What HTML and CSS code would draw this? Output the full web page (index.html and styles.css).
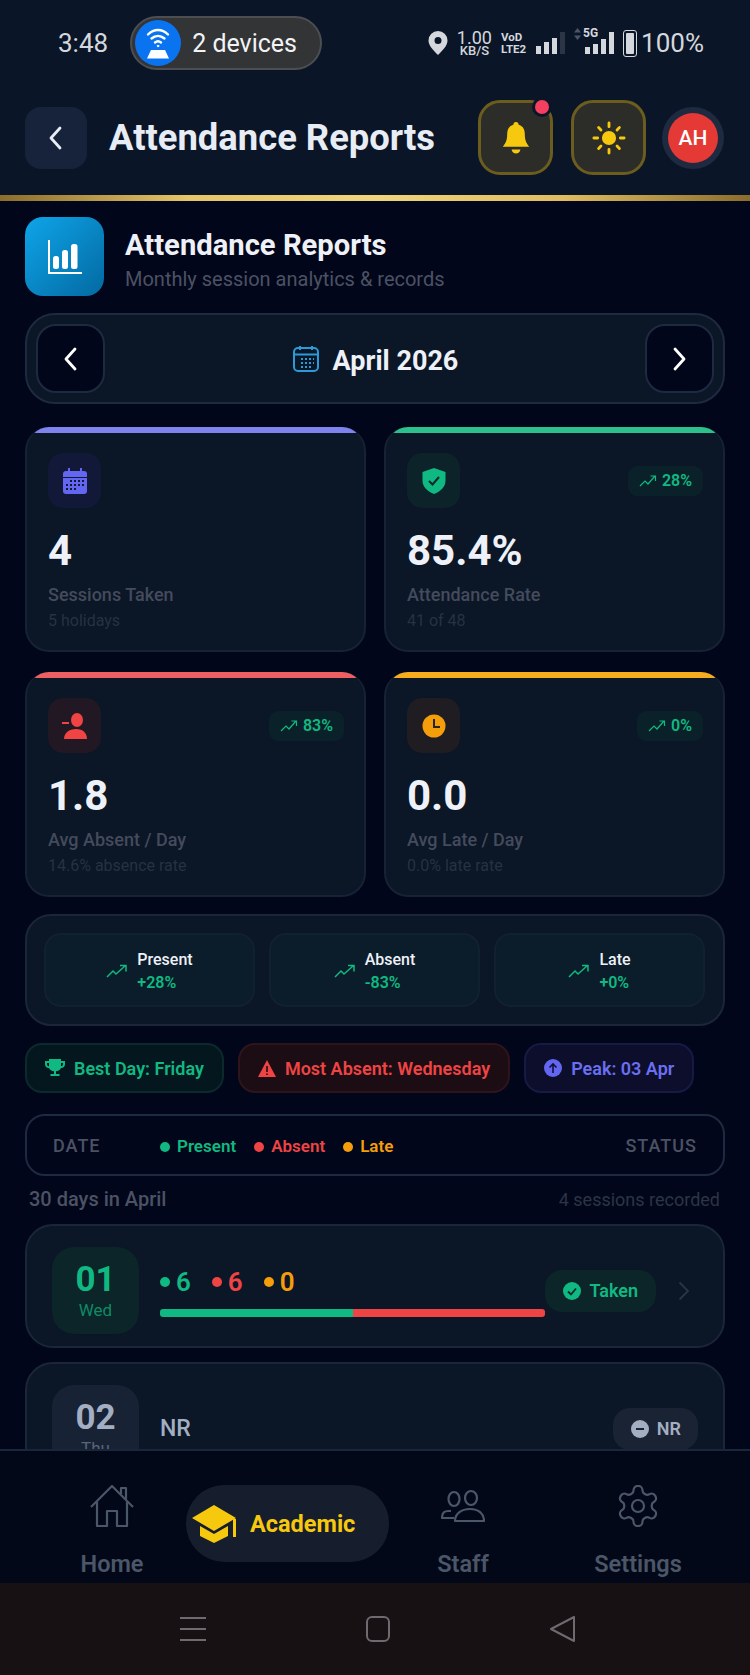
FILE: index.html
```html
<!DOCTYPE html>
<html lang="en">
<head>
<meta charset="UTF-8">
<meta name="viewport" content="width=device-width, initial-scale=1.0">
<title>Attendance Reports</title>
<link rel="stylesheet" href="styles.css">
</head>
<body>
<div class="app">

  <!-- Phone status bar -->
  <div class="statusbar">
    <span class="clock">3:48</span>
    <div class="hotspot">
      <span class="hotspot-icon">
        <svg width="30" height="36" viewBox="0 0 30 36" fill="none" stroke="#fff" stroke-width="2.4" stroke-linecap="round">
          <path d="M5 9.500c6-6 14-6 20 0"/><path d="M8.500 13.500c4-3.500 9-3.500 13 0"/><path d="M12 17.500c2-1.700 4-1.700 6 0"/>
          <circle cx="15" cy="21" r="0.8" fill="#fff" stroke-width="1"/>
          <path d="M4 33.500l4-8.500h14l4 8.500z" fill="#fff" stroke="none"/>
        </svg>
      </span>
      <span>2 devices</span>
    </div>
    <div class="status-right">
      <svg class="pin" width="20" height="24" viewBox="0 0 20 24"><path fill="#d4d7dc" fill-rule="evenodd" d="M10 0a9.500 9.500 0 0 1 9.500 9.500C19.500 15 14 20 10 24 6 20 .5 15 .5 9.500A9.500 9.500 0 0 1 10 0zm0 6a3.500 3.500 0 1 0 0 7 3.500 3.500 0 0 0 0-7z"/></svg>
      <div class="speed"><b>1.00</b><i>KB/S</i></div>
      <div class="volte"><b>VoD</b><b>LTE2</b></div>
      <div class="bars">
        <span class="h1"></span><span class="h2"></span><span class="h3"></span><span class="h4 off"></span>
      </div>
      <div class="net5g">
        <svg class="updown" width="7" height="12" viewBox="0 0 7 12" fill="#4a5566"><path d="M3.500 0L7 4.500H0zM3.500 12L0 7.500h7z"/></svg>
        <em>5G</em>
        <div class="bars">
          <span class="g1"></span><span class="g2"></span><span class="g3"></span><span class="h4"></span>
        </div>
      </div>
      <span class="battery"><span></span></span>
      <span class="percent">100%</span>
    </div>
  </div>

  <!-- App header -->
  <header class="topbar">
    <button class="back-btn">
      <svg width="20" height="26" viewBox="0 0 20 26" fill="none" stroke="#e8edf5" stroke-width="2.8" stroke-linecap="round" stroke-linejoin="round"><path d="M14 3L5 13l9 10"/></svg>
    </button>
    <h1 class="page-title">Attendance Reports</h1>
    <button class="gold-btn bell">
      <svg width="30" height="34" viewBox="0 0 34 38" fill="#f6c90e"><path d="M17 1c2 0 3 1.500 3 3 5 1.500 7 5.500 7 11 0 7 2 10 5 14H2c3-4 5-7 5-14 0-5.500 2-9.500 7-11 0-1.500 1-3 3-3z"/><path d="M12 32h10c-.5 3-2.500 4.500-5 4.500S12.500 35 12 32z"/></svg>
      <span class="notif-dot"></span>
    </button>
    <button class="gold-btn">
      <svg width="34" height="34" viewBox="0 0 36 36" fill="#f6c90e" stroke="#f6c90e" stroke-width="3" stroke-linecap="round"><circle cx="18" cy="18" r="7.500" stroke="none"/><path d="M18 2v4M18 30v4M2 18h4M30 18h4M7 7l2.500 2.500M26.500 26.500L29 29M7 29l2.500-2.500M26.500 9.500L29 7" fill="none"/></svg>
    </button>
    <div class="avatar"><span>AH</span></div>
  </header>
  <div class="gold-line"></div>

  <main class="content">

    <div class="section-head">
      <div class="section-icon">
        <svg width="36" height="36" viewBox="0 0 36 36" fill="#fff"><path d="M2 1v33h33" fill="none" stroke="#fff" stroke-width="2"/><rect x="6" y="17" width="6" height="13" rx="2.500"/><rect x="15" y="11" width="6" height="19" rx="2.500"/><rect x="24" y="5" width="6.500" height="25" rx="2.500"/></svg>
      </div>
      <div class="section-text">
        <h2>Attendance Reports</h2>
        <p>Monthly session analytics &amp; records</p>
      </div>
    </div>

    <div class="month-nav">
      <button class="month-btn">
        <svg width="20" height="26" viewBox="0 0 20 26" fill="none" stroke="#fff" stroke-width="2.8" stroke-linecap="round" stroke-linejoin="round"><path d="M14 3L5 13l9 10"/></svg>
      </button>
      <div class="month-label">
        <svg width="28" height="27" viewBox="0 0 28 27" fill="none" stroke="#2c9ad8" stroke-width="2"><rect x="2" y="3" width="24" height="23" rx="4"/><path d="M2 9.500h24M8 1v4M20 1v4"/><path d="M9 14h2M13 14h2M17 14h2M21 14h1M9 18h2M13 18h2M17 18h2M21 18h1M9 22h2M13 22h2M17 22h2" stroke-width="1.8"/></svg>
        <span>April 2026</span>
      </div>
      <button class="month-btn">
        <svg width="20" height="26" viewBox="0 0 20 26" fill="none" stroke="#fff" stroke-width="2.8" stroke-linecap="round" stroke-linejoin="round"><path d="M6 3l9 10-9 10"/></svg>
      </button>
    </div>

    <div class="stat-grid">
      <div class="stat-card indigo">
        <div class="stat-top">
          <span class="stat-icon">
            <svg width="24" height="26" viewBox="0 0 24 26" fill="#6366f1"><path fill-rule="evenodd" d="M5 0h2v3h10V0h2v3h2a3 3 0 0 1 3 3v17a3 3 0 0 1-3 3H3a3 3 0 0 1-3-3V6a3 3 0 0 1 3-3h2zM0 9v1h24V9zM7 12v2h2v-2zm4 0v2h2v-2zm4 0v2h2v-2zm4 0v2h2v-2zM3 16v2h2v-2zm4 0v2h2v-2zm4 0v2h2v-2zm4 0v2h2v-2zm4 0v2h2v-2zM3 20v2h2v-2zm4 0v2h2v-2zm4 0v2h2v-2z"/></svg>
          </span>
        </div>
        <div class="stat-value">4</div>
        <div class="stat-label">Sessions Taken</div>
        <div class="stat-sub">5 holidays</div>
      </div>

      <div class="stat-card green">
        <div class="stat-top">
          <span class="stat-icon">
            <svg width="24" height="26" viewBox="0 0 24 26"><path fill="#10b981" d="M12 0l11.500 4v8.500C23.500 19 18.500 23.500 12 26 5.500 23.500.5 19 .5 12.500V4z"/><path d="M7 13l3.500 3.500L17 9" fill="none" stroke="#0a2a2a" stroke-width="2"/></svg>
          </span>
          <span class="trend">
            <svg width="18" height="12" viewBox="0 0 18 12" fill="none" stroke="#10b981" stroke-width="1.2"><path d="M1 11l5-5 3 3 7-8M11.500 1H16.500V6"/></svg>
            28%
          </span>
        </div>
        <div class="stat-value">85.4%</div>
        <div class="stat-label">Attendance Rate</div>
        <div class="stat-sub">41 of 48</div>
      </div>

      <div class="stat-card red">
        <div class="stat-top">
          <span class="stat-icon">
            <svg width="26" height="26" viewBox="0 0 26 26" fill="#ef4444"><ellipse cx="15" cy="7" rx="6" ry="7"/><path d="M3 26c0-6 5-10 12-10s11 4 11 10z" transform="translate(-1 0)"/><rect x="0" y="9" width="7" height="2"/></svg>
          </span>
          <span class="trend">
            <svg width="18" height="12" viewBox="0 0 18 12" fill="none" stroke="#10b981" stroke-width="1.2"><path d="M1 11l5-5 3 3 7-8M11.500 1H16.500V6"/></svg>
            83%
          </span>
        </div>
        <div class="stat-value">1.8</div>
        <div class="stat-label">Avg Absent / Day</div>
        <div class="stat-sub">14.6% absence rate</div>
      </div>

      <div class="stat-card amber">
        <div class="stat-top">
          <span class="stat-icon">
            <svg width="24" height="24" viewBox="0 0 24 24"><circle cx="12" cy="12" r="11.500" fill="#f59e0b"/><path d="M12 5v8h6" fill="none" stroke="#2a2420" stroke-width="2"/></svg>
          </span>
          <span class="trend">
            <svg width="18" height="12" viewBox="0 0 18 12" fill="none" stroke="#10b981" stroke-width="1.2"><path d="M1 11l5-5 3 3 7-8M11.500 1H16.500V6"/></svg>
            0%
          </span>
        </div>
        <div class="stat-value">0.0</div>
        <div class="stat-label">Avg Late / Day</div>
        <div class="stat-sub">0.0% late rate</div>
      </div>
    </div>

    <div class="compare-panel">
      <div class="compare-item">
        <svg width="22" height="14" viewBox="0 0 22 14" fill="none" stroke="#10b981" stroke-width="1.5"><path d="M1 13l6-6 3 3 9-8M14 1.500h6v6"/></svg>
        <div><strong>Present</strong><span>+28%</span></div>
      </div>
      <div class="compare-item">
        <svg width="22" height="14" viewBox="0 0 22 14" fill="none" stroke="#10b981" stroke-width="1.5"><path d="M1 13l6-6 3 3 9-8M14 1.500h6v6"/></svg>
        <div><strong>Absent</strong><span>-83%</span></div>
      </div>
      <div class="compare-item">
        <svg width="22" height="14" viewBox="0 0 22 14" fill="none" stroke="#10b981" stroke-width="1.5"><path d="M1 13l6-6 3 3 9-8M14 1.500h6v6"/></svg>
        <div><strong>Late</strong><span>+0%</span></div>
      </div>
    </div>

    <div class="chips">
      <div class="chip chip-green">
        <svg width="20" height="19" viewBox="0 0 20 19" fill="#10b981"><path d="M4 0h12v2h4v3c0 2.500-1.500 4-4.200 4.300C15 11 13.500 12 11 12.300V15h3.500v2h-9v-2H9v-2.700C6.500 12 5 11 4.200 9.300 1.500 9 0 7.500 0 5V2h4zM2 4v1c0 1.200.6 2 2 2.300V4zm14 0v3.300c1.400-.3 2-1.100 2-2.300V4z"/></svg>
        Best Day: Friday
      </div>
      <div class="chip chip-red">
        <svg width="18" height="17" viewBox="0 0 18 17"><path fill="#ef4444" d="M9 0l9 17H0z"/><path d="M9 6v6M9 13.500v1.500" stroke="#200d14" stroke-width="1.6"/></svg>
        Most Absent: Wednesday
      </div>
      <div class="chip chip-indigo">
        <svg width="18" height="18" viewBox="0 0 18 18"><circle cx="9" cy="9" r="9" fill="#6366f1"/><path d="M9 14V5M5.500 8.500L9 5l3.500 3.500" fill="none" stroke="#12133a" stroke-width="1.6"/></svg>
        Peak: 03 Apr
      </div>
    </div>

    <div class="legend-bar">
      <span class="legend-title date-col">DATE</span>
      <div class="legend">
        <span class="tx-green"><i class="dot bg-green"></i>Present</span>
        <span class="tx-red"><i class="dot bg-red"></i>Absent</span>
        <span class="tx-amber"><i class="dot bg-amber"></i>Late</span>
      </div>
      <span class="legend-title">STATUS</span>
    </div>

    <div class="days-head">
      <span>30 days in April</span>
      <span class="recorded">4 sessions recorded</span>
    </div>

    <div class="day-row">
      <div class="day-box taken">
        <b>01</b>
        <span>Wed</span>
      </div>
      <div class="day-info">
        <div class="counts">
          <span class="tx-green"><i class="dot bg-green"></i>6</span>
          <span class="tx-red"><i class="dot bg-red"></i>6</span>
          <span class="tx-amber"><i class="dot bg-amber"></i>0</span>
        </div>
        <div class="split-bar"><span class="bg-green"></span><span class="bg-red"></span></div>
      </div>
      <div class="status-pill pill-taken">
        <svg width="18" height="18" viewBox="0 0 18 18"><circle cx="9" cy="9" r="9" fill="#10b981"/><path d="M5 9.500l3 3 5-6" fill="none" stroke="#0a2a2a" stroke-width="1.8"/></svg>
        Taken
      </div>
      <div class="row-chevron">
        <svg width="12" height="20" viewBox="0 0 12 20" fill="none" stroke="#2a3648" stroke-width="1.8"><path d="M1.500 1.500L10 10l-8.500 8.500"/></svg>
      </div>
    </div>

    <div class="day-row">
      <div class="day-box">
        <b>02</b>
        <span>Thu</span>
      </div>
      <div class="day-info nr">NR</div>
      <div class="status-pill pill-nr">
        <svg width="18" height="18" viewBox="0 0 18 18"><circle cx="9" cy="9" r="9" fill="#a3aec2"/><path d="M5 9h8" stroke="#1a2333" stroke-width="2"/></svg>
        NR
      </div>
    </div>
  </main>

  <!-- Bottom tabs -->
  <nav class="tabs">
    <div class="tab">
      <svg width="44" height="42" viewBox="0 0 44 42" fill="none" stroke="#4b5668" stroke-width="2.2" stroke-linejoin="round"><path d="M1 22L22 1l21 21M7 17v24h10V26h10v15h10V17"/><path d="M31 9V3h5v11"/></svg>
      <span>Home</span>
    </div>
    <div class="tab-active">
      <svg width="46" height="38" viewBox="0 0 46 38" fill="#f6c90e"><path d="M22 0l22 13-22 13L0 13z"/><path d="M8 21l14 8 14-8v10l-14 7-14-7z"/><rect x="41" y="14" width="3" height="18"/></svg>
      <span>Academic</span>
    </div>
    <div class="tab">
      <svg width="44" height="42" viewBox="0 -5 44 42" fill="none" stroke="#4b5668" stroke-width="2.2" stroke-linejoin="round"><ellipse cx="13" cy="9" rx="5.500" ry="7"/><ellipse cx="30" cy="8" rx="6" ry="7"/><path d="M10 21H7C3 21 1 24 1 28h12"/><path d="M14 31c0-7 6-12 15-12s14 5 14 12z"/></svg>
      <span>Staff</span>
    </div>
    <div class="tab">
      <svg width="44" height="42" viewBox="1.500 1.500 21 21" fill="none" stroke="#4b5668" stroke-width="1.1"><path d="M12.220 2h-.44a2 2 0 0 0-2 2v.18a2 2 0 0 1-1 1.730l-.43.25a2 2 0 0 1-2 0l-.15-.08a2 2 0 0 0-2.730.73l-.22.38a2 2 0 0 0 .73 2.730l.15.1a2 2 0 0 1 1 1.720v.51a2 2 0 0 1-1 1.740l-.15.09a2 2 0 0 0-.73 2.730l.22.38a2 2 0 0 0 2.730.73l.15-.08a2 2 0 0 1 2 0l.43.25a2 2 0 0 1 1 1.730V20a2 2 0 0 0 2 2h.44a2 2 0 0 0 2-2v-.18a2 2 0 0 1 1-1.730l.43-.25a2 2 0 0 1 2 0l.15.08a2 2 0 0 0 2.730-.73l.22-.39a2 2 0 0 0-.73-2.730l-.15-.08a2 2 0 0 1-1-1.740v-.5a2 2 0 0 1 1-1.740l.15-.09a2 2 0 0 0 .73-2.730l-.22-.38a2 2 0 0 0-2.730-.73l-.15.08a2 2 0 0 1-2 0l-.43-.25a2 2 0 0 1-1-1.730V4a2 2 0 0 0-2-2z"/><circle cx="12" cy="12" r="3"/></svg>
      <span>Settings</span>
    </div>
  </nav>

  <!-- Android navigation -->
  <div class="sysnav">
    <svg width="26" height="26" viewBox="0 0 26 26" stroke="#6e6a70" stroke-width="2.2"><path d="M0 2h26M0 13h26M0 24h26"/></svg>
    <svg width="26" height="26" viewBox="0 0 26 26" fill="none" stroke="#6e6a70" stroke-width="2"><rect x="2" y="1" width="22" height="24" rx="5"/></svg>
    <svg width="26" height="26" viewBox="0 0 26 26" fill="none" stroke="#6e6a70" stroke-width="2" stroke-linejoin="round"><path d="M24 1v24L1 13z"/></svg>
  </div>
</div>
</body>
</html>
```

FILE: styles.css
```css
* {
  box-sizing: border-box;
}

body {
  margin: 0;
  background-color: #02061a;
  font-family: Roboto, "Liberation Sans", sans-serif;
  color: #e8edf5;
}

h1, h2, p {
  margin: 0;
}

button {
  padding: 0;
  font: inherit;
  cursor: pointer;
}

.app {
  display: flex;
  flex-direction: column;
  width: 750px;
  height: 1675px;
  overflow: hidden;
}

/* Status bar */
.statusbar {
  display: flex;
  align-items: flex-start;
  height: 92px;
  padding: 16px 46px 0 58px;
  background-color: #0a1628;
}

.clock {
  margin-top: 14px;
  font-size: 26px;
  line-height: 26px;
  color: #d4d7dc;
}

.hotspot {
  display: flex;
  align-items: center;
  gap: 11px;
  width: 192px;
  height: 54px;
  margin-left: 22px;
  padding-left: 3px;
  background-color: #333436;
  border: 2px solid #4d4e52;
  border-radius: 27px;
  font-size: 25px;
  color: #f2f3f5;
}

.hotspot-icon {
  display: flex;
  align-items: center;
  justify-content: center;
  width: 46px;
  height: 46px;
  background-color: #0a74f0;
  border-radius: 50%;
}

.status-right {
  display: flex;
  align-items: center;
  height: 54px;
  margin-left: auto;
  color: #d4d7dc;
}

.pin {
  margin-right: 9px;
}

.speed {
  display: flex;
  flex-direction: column;
  align-items: center;
  margin-right: 9px;
}

.speed b {
  font-size: 18px;
  font-weight: 400;
  line-height: 15px;
}

.speed i {
  font-size: 13px;
  font-style: normal;
  font-weight: 500;
  line-height: 12px;
}

.volte {
  display: flex;
  flex-direction: column;
  margin-right: 10px;
  font-size: 11.5px;
  line-height: 12px;
}

.bars {
  display: flex;
  align-items: flex-end;
  gap: 3px;
  height: 22px;
}

.bars span {
  width: 5px;
  background-color: #d4d7dc;
}

.bars .h1 { height: 8px; }
.bars .h2 { height: 12px; }
.bars .h3 { height: 16px; }
.bars .h4 { height: 22px; }
.bars .g1 { height: 7px; }
.bars .g2 { height: 10px; }
.bars .g3 { height: 15px; }
.bars .off { background-color: #2b3545; }

.net5g {
  position: relative;
  margin-left: 9px;
  margin-right: 9px;
  padding-left: 11px;
}

.net5g em {
  position: absolute;
  top: -5px;
  left: 9px;
  font-size: 12px;
  font-weight: 700;
  font-style: normal;
  line-height: 12px;
}

.updown {
  position: absolute;
  top: -4px;
  left: 0;
}

.battery {
  display: flex;
  align-items: flex-end;
  width: 14px;
  height: 27px;
  padding: 2px;
  border: 1.5px solid #d4d7dc;
  border-radius: 3px;
}

.battery span {
  width: 100%;
  height: 100%;
  background-color: #d4d7dc;
  border-radius: 1px;
}

.percent {
  margin-left: 4px;
  font-size: 26px;
}

/* Header */
.topbar {
  display: flex;
  align-items: center;
  height: 103px;
  padding: 0 26px 12px 25px;
  background-color: #0a1628;
}

.back-btn {
  display: flex;
  align-items: center;
  justify-content: center;
  width: 62px;
  height: 62px;
  background-color: #17233a;
  border: 0;
  border-radius: 16px;
}

.page-title {
  margin-left: 22px;
  font-size: 36.4px;
  font-weight: 700;
  color: #e8edf5;
  white-space: nowrap;
}

.gold-btn {
  position: relative;
  display: flex;
  align-items: center;
  justify-content: center;
  width: 75px;
  height: 75px;
  margin-left: 18px;
  background-color: #2c2c28;
  border: 3px solid #6b5d1e;
  border-radius: 22px;
}

.bell {
  margin-left: auto;
}

.notif-dot {
  position: absolute;
  top: -6px;
  right: -2px;
  width: 20px;
  height: 20px;
  background-color: #f43f5e;
  border: 3px solid #0a1628;
  border-radius: 50%;
}

.avatar {
  display: flex;
  align-items: center;
  justify-content: center;
  flex-shrink: 0;
  width: 62px;
  height: 62px;
  margin-left: 16px;
  background-color: #1e2a40;
  border-radius: 50%;
}

.avatar span {
  display: flex;
  align-items: center;
  justify-content: center;
  width: 50px;
  height: 50px;
  background-color: #e53935;
  border-radius: 50%;
  font-size: 21px;
  font-weight: 500;
  color: #fff;
}

.gold-line {
  height: 6px;
  background: linear-gradient(90deg, #8a6d2c, #e6c468 25%, #f0d47c 50%, #e0bc60 75%, #8a6d2c);
}

/* Main content */
.content {
  flex: 1;
  min-height: 0;
  overflow: hidden;
  padding: 16px 25px 0;
}

.section-head {
  display: flex;
  align-items: center;
  gap: 21px;
  margin-bottom: 17px;
}

.section-icon {
  display: flex;
  align-items: center;
  justify-content: center;
  width: 79px;
  height: 79px;
  background: linear-gradient(135deg, #0ea5e9, #0369a1);
  border-radius: 18px;
}

.section-text {
  padding-top: 6px;
}

.section-head h2 {
  font-size: 29.2px;
  font-weight: 700;
  line-height: 32px;
  color: #eef1f7;
}

.section-head p {
  margin-top: 6px;
  font-size: 20px;
  line-height: 24px;
  color: #4b5263;
}

.month-nav {
  display: flex;
  align-items: center;
  justify-content: space-between;
  height: 91px;
  padding: 0 9px;
  background-color: #0b1626;
  border: 2px solid #1e2a40;
  border-radius: 30px;
}

.month-btn {
  display: flex;
  align-items: center;
  justify-content: center;
  width: 69px;
  height: 69px;
  background-color: #02061a;
  border: 2px solid #1e2a40;
  border-radius: 20px;
}

.month-label {
  display: flex;
  align-items: center;
  gap: 13px;
  font-size: 27px;
  font-weight: 700;
  color: #eef1f7;
}

.month-label span {
  padding-top: 4px;
}

/* Stat cards */
.stat-grid {
  display: grid;
  grid-template-columns: 341px 341px;
  grid-auto-rows: 225px;
  gap: 20px 18px;
  margin-top: 23px;
}

.stat-card {
  padding: 0 20px 0 21px;
  overflow: hidden;
  background-color: #0b1626;
  border: 2px solid #162236;
  border-top: 0;
  border-radius: 24px;
}

.stat-card::before {
  content: "";
  display: block;
  height: 6px;
  margin: 0 -21px 20px;
  background-color: #7f83ee;
}

.stat-card.indigo::before { background-color: #7f83ee; }
.stat-card.green::before { background-color: #2cc08d; }
.stat-card.red::before { background-color: #ee5f63; }
.stat-card.amber::before { background-color: #f7ac1e; }

.stat-top {
  display: flex;
  align-items: center;
  justify-content: space-between;
  height: 55px;
}

.stat-icon {
  display: flex;
  align-items: center;
  justify-content: center;
  width: 53px;
  height: 55px;
  border-radius: 15px;
}

.indigo .stat-icon { background-color: #121838; }
.green .stat-icon { background-color: #0b2329; }
.red .stat-icon { background-color: #211823; }
.amber .stat-icon { background-color: #1f1d22; }

.trend {
  display: flex;
  align-items: center;
  gap: 5px;
  height: 30px;
  padding: 0 11px;
  background-color: #0b2129;
  border-radius: 9px;
  font-size: 16px;
  font-weight: 600;
  color: #10b981;
}

.stat-value {
  margin-top: 21px;
  font-size: 42px;
  font-weight: 700;
  line-height: 44px;
  color: #eef1f7;
}

.stat-label {
  margin-top: 11px;
  font-size: 18px;
  font-weight: 500;
  line-height: 22px;
  color: #434b5c;
}

.stat-sub {
  margin-top: 5px;
  font-size: 16px;
  line-height: 20px;
  color: #273142;
}

/* This month against last month */
.compare-panel {
  display: grid;
  grid-template-columns: repeat(3, 211px);
  gap: 14px;
  height: 112px;
  margin-top: 17px;
  padding: 17px 17px;
  background-color: #0b1626;
  border: 2px solid #1a2639;
  border-radius: 26px;
}

.compare-item {
  display: flex;
  align-items: center;
  justify-content: center;
  gap: 9px;
  padding-top: 2px;
  background-color: #0b1c2a;
  border: 2px solid #11212f;
  border-radius: 17px;
}

.compare-item strong,
.compare-item span {
  display: block;
  font-size: 16px;
  line-height: 23px;
}

.compare-item strong {
  font-weight: 500;
  color: #eef1f7;
}

.compare-item span {
  font-weight: 600;
  color: #10b981;
}

/* Insight chips */
.chips {
  display: flex;
  gap: 14px;
  margin-top: 17px;
}

.chip {
  display: flex;
  align-items: center;
  gap: 9px;
  height: 50px;
  padding: 0 18px;
  border: 2px solid;
  border-radius: 17px;
  font-size: 18px;
  font-weight: 600;
  white-space: nowrap;
}

.chip-green {
  background-color: #04161e;
  border-color: #0b2a2c;
  color: #10b981;
}

.chip-red {
  background-color: #1c0d14;
  border-color: #2f141c;
  color: #ef4444;
}

.chip-indigo {
  background-color: #0c0e2c;
  border-color: #181a44;
  color: #6a6ff0;
}

/* Legend */
.legend-bar {
  display: flex;
  align-items: center;
  height: 62px;
  margin-top: 21px;
  padding: 0 26px;
  border: 2px solid #1e2a40;
  border-radius: 20px;
}

.legend-title {
  font-size: 18px;
  font-weight: 500;
  letter-spacing: 1px;
  color: #4b5263;
}

.date-col {
  width: 107px;
}

.legend {
  display: flex;
  gap: 18px;
  margin-top: 2px;
  margin-right: auto;
  font-size: 17px;
  font-weight: 600;
}

.dot {
  display: inline-block;
  width: 10px;
  height: 10px;
  margin-right: 7px;
  border-radius: 50%;
}

.bg-green { background-color: #10b981; }
.bg-red { background-color: #ef4444; }
.bg-amber { background-color: #f59e0b; }
.tx-green { color: #10b981; }
.tx-red { color: #ef4444; }
.tx-amber { color: #f59e0b; }

.days-head {
  display: flex;
  justify-content: space-between;
  align-items: center;
  height: 22px;
  margin: 12px 0 14px;
  padding: 0 5px 0 4px;
  font-size: 20px;
  font-weight: 500;
  color: #4b5263;
}

.recorded {
  font-size: 18px;
  font-weight: 400;
  color: #2b3545;
}

/* Day rows */
.day-row {
  display: flex;
  align-items: center;
  height: 124px;
  margin-bottom: 14px;
  padding: 22px 25px 13px 25px;
  background-color: #0b1626;
  border: 2px solid #1a2639;
  border-radius: 28px;
}

.day-box {
  display: flex;
  flex-direction: column;
  align-items: center;
  flex-shrink: 0;
  width: 87px;
  height: 87px;
  padding-top: 14px;
  background-color: #172234;
  border-radius: 22px;
}

.day-box b {
  font-size: 35px;
  font-weight: 700;
  line-height: 38px;
  color: #a3aec2;
}

.day-box span {
  margin-top: 2px;
  font-size: 17px;
  line-height: 18px;
  color: #5a6578;
}

.day-box.taken { background-color: #0b2529; }
.day-box.taken b { color: #10b981; }
.day-box.taken span { color: #0e8c66; }

.day-info {
  flex: 1;
  margin-left: 21px;
}

.day-info.nr {
  font-size: 23px;
  font-weight: 500;
  color: #a3aec2;
}

.counts {
  display: flex;
  gap: 21px;
  margin-top: 3px;
  font-size: 26px;
  font-weight: 600;
  line-height: 28px;
}

.counts .dot {
  margin-right: 6px;
  vertical-align: 4px;
}

.split-bar {
  display: flex;
  height: 8px;
  margin-top: 13px;
  overflow: hidden;
  border-radius: 3px;
}

.split-bar span {
  flex: 1;
}

.status-pill {
  display: flex;
  align-items: center;
  gap: 8px;
  flex-shrink: 0;
  height: 42px;
  padding: 0 18px;
  border-radius: 17px;
  font-size: 18px;
  font-weight: 600;
}

.pill-taken {
  background-color: #0b2529;
  color: #10b981;
}

.pill-nr {
  padding: 0 17px 0 18px;
  background-color: #1a2333;
  color: #a3aec2;
}

.row-chevron {
  display: flex;
  justify-content: flex-end;
  flex-shrink: 0;
  width: 42px;
  padding-right: 8px;
}

/* Bottom tabs */
.tabs {
  display: grid;
  grid-template-columns: 148px 203px 148px 202px;
  flex-shrink: 0;
  height: 134px;
  padding: 34px 0 0 38px;
  background-color: #020817;
  border-top: 2px solid #1a2639;
}

.tab {
  display: flex;
  flex-direction: column;
  align-items: center;
  justify-content: space-between;
  height: 93px;
  font-size: 23.5px;
  font-weight: 600;
  color: #4b5668;
}

.tab-active {
  display: flex;
  align-items: center;
  gap: 12px;
  height: 77px;
  padding-left: 6px;
  background-color: #161d2d;
  border-radius: 38px;
  font-size: 23.5px;
  font-weight: 700;
  color: #f6c90e;
}

.sysnav {
  display: flex;
  align-items: center;
  flex-shrink: 0;
  gap: 159px;
  height: 92px;
  padding-left: 180px;
  background-color: #181114;
}
```
